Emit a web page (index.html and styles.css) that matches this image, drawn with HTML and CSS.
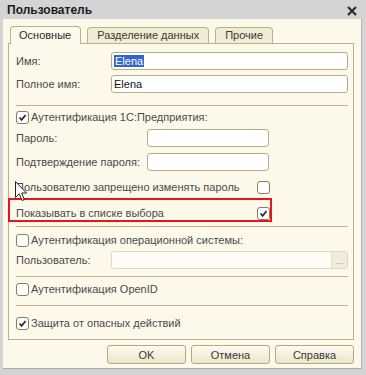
FILE: index.html
```html
<!DOCTYPE html>
<html lang="ru">
<head>
    <meta charset="UTF-8">
    <meta name="viewport" content="width=device-width, initial-scale=1.0">
    <title>Пользователь</title>
    <link rel="stylesheet" href="styles.css">
</head>
<body>

    <div class="window">
        <div class="titlebar">
            <span class="title">Пользователь</span>
            <svg class="close" width="10" height="10" viewBox="0 0 10 10">
                <path d="M1 1 L9 9 M9 1 L1 9" stroke="#2b2b2b" stroke-width="2.2" fill="none"/>
            </svg>
        </div>

        <div class="frame">
            <div class="tabs">
                <div class="tab active">Основные</div>
                <div class="tab">Разделение данных</div>
                <div class="tab">Прочие</div>
            </div>

            <div class="panel">
                <div class="field first">
                    <label class="lbl">Имя:</label>
                    <div class="input"><span class="selected">Elena</span></div>
                </div>
                <div class="field gap5">
                    <label class="lbl">Полное имя:</label>
                    <div class="input">Elena</div>
                </div>

                <div class="sep s12"></div>

                <div class="check m4">
                    <span class="cb on"><svg viewBox="0 0 11 11"><path d="M2.5 5.5 L4.6 7.8 L8.6 3" /></svg></span>
                    <span>Аутентификация 1С:Предприятия:</span>
                </div>

                <div class="field pass gap5">
                    <label class="lbl">Пароль:</label>
                    <div class="input"></div>
                </div>
                <div class="field pass gap6">
                    <label class="lbl">Подтверждение пароля:</label>
                    <div class="input"></div>
                </div>

                <div class="check right m9">
                    <span class="txt">Пользователю запрещено изменять пароль</span>
                    <span class="cb"></span>
                </div>

                <div class="check right m12">
                    <span class="txt">Показывать в списке выбора</span>
                    <span class="cb on"><svg viewBox="0 0 11 11"><path d="M2.5 5.5 L4.6 7.8 L8.6 3" /></svg></span>
                </div>

                <div class="sep s6"></div>

                <div class="check m6">
                    <span class="cb"></span>
                    <span>Аутентификация операционной системы:</span>
                </div>

                <div class="field gap4">
                    <label class="lbl">Пользователь:</label>
                    <div class="input disabled">
                        <span class="value"></span>
                        <span class="pick">...</span>
                    </div>
                </div>

                <div class="sep s7"></div>

                <div class="check m5">
                    <span class="cb"></span>
                    <span>Аутентификация OpenID</span>
                </div>

                <div class="sep s9"></div>

                <div class="check m10">
                    <span class="cb on"><svg viewBox="0 0 11 11"><path d="M2.5 5.5 L4.6 7.8 L8.6 3" /></svg></span>
                    <span>Защита от опасных действий</span>
                </div>

                <!-- annotation over the form -->
                <div class="highlight"></div>
                <svg class="cursor" width="13" height="21" viewBox="0 0 13 21">
                    <path d="M0.5 0.5 L0.5 16.5 L4.3 12.8 L7 19.5 L9.3 18.5 L6.7 12 L11.5 12 Z" fill="#fff" stroke="#222" stroke-width="1"/>
                </svg>
            </div>

            <div class="buttons">
                <button class="btn">OK</button>
                <button class="btn">Отмена</button>
                <button class="btn">Справка</button>
            </div>
        </div>
    </div>

</body>
</html>
```

FILE: styles.css
```css
body {
    margin: 0;
    padding: 0;
    background-color: #d4d4d4;
    font-family: "Liberation Sans", Arial, sans-serif;
    font-size: 11px;
    color: #4a4a4a;
}

.window {
    width: 366px;
    height: 375px;
    overflow: hidden;
}

.titlebar {
    height: 19px;
    display: flex;
    align-items: center;
    justify-content: space-between;
    padding: 0 9px 0 7px;
    background-color: #d4d4d4;
}

.title {
    font-size: 12px;
    font-weight: bold;
    color: #1c1c1c;
    padding-top: 1px;
}

.close {
    margin-top: 2px;
}

.frame {
    margin: 0 4px 0 3px;
    height: 350px;
    padding: 7px 7px 0 5px;
    box-sizing: border-box;
    background-color: #fcf9eb;
    border-right: 1px solid #b4b4b4;
    border-bottom: 1px solid #aaaaaa;
}

/* tabs */

.tabs {
    display: flex;
    align-items: flex-start;
    gap: 6px;
    margin-left: 2px;
    height: 17px;
}

.tab {
    height: 16px;
    line-height: 15px;
    margin-top: 1px;
    padding: 0 9px;
    border: 1px solid #b9b18b;
    border-bottom: none;
    border-radius: 4px 4px 0 0;
    background-color: #f0ebd3;
    color: #3a3a3a;
    box-sizing: border-box;
}

.tab.active {
    height: 18px;
    margin-top: 0;
    padding: 0 9px 0 8px;
    line-height: 17px;
    background-color: #fcf9eb;
    position: relative;
    z-index: 1;
    color: #2a2a2a;
}

/* panel */

.panel {
    position: relative;
    height: 297px;
    box-sizing: border-box;
    border: 1px solid #b9b18b;
    padding: 8px 5px 0 7px;
    background-color: #fcf9eb;
}

.field {
    display: flex;
    align-items: center;
    height: 18px;
}

.lbl {
    flex: 0 0 95px;
}

.field.pass .lbl {
    flex-basis: 131px;
}

.input {
    flex: 1;
    height: 18px;
    box-sizing: border-box;
    border: 1px solid #b6ae88;
    border-radius: 3px;
    background-color: #fff;
    padding-left: 2px;
    line-height: 16px;
    color: #111;
}

.field.pass .input {
    flex: 0 0 122px;
}

.selected {
    background-color: #3366cc;
    color: #fff;
    padding: 0 1px;
    display: inline-block;
    line-height: 12px;
    margin-top: 2px;
}

.input.disabled {
    display: flex;
    padding: 0;
    border-color: #dcd7c1;
    background-color: #fdfcf6;
}

.input.disabled .value {
    flex: 1;
}

.pick {
    width: 15px;
    border-left: 1px solid #e6e1cc;
    background-color: #f1edda;
    border-radius: 0 2px 2px 0;
    color: #a39b7c;
    font-size: 9px;
    text-align: center;
    line-height: 18px;
}

.sep {
    height: 1px;
    background-color: #bdb48c;
}

.check {
    display: flex;
    align-items: center;
    height: 14px;
    gap: 2px;
}

.check.right .txt {
    flex: 0 0 239px;
}

.cb {
    width: 13px;
    height: 13px;
    box-sizing: border-box;
    border: 1px solid #857e63;
    border-radius: 3px;
    background-color: #fff;
    display: inline-flex;
}

.cb svg {
    width: 11px;
    height: 11px;
}

.cb svg path {
    fill: none;
    stroke: #2e2e2e;
    stroke-width: 1.8;
}

.gap4 { margin-top: 4px; }
.gap5 { margin-top: 5px; }
.gap6 { margin-top: 6px; }
.m4 { margin-top: 4px; }
.m5 { margin-top: 5px; }
.m6 { margin-top: 6px; }
.m9 { margin-top: 9px; }
.m10 { margin-top: 10px; }
.m12 { margin-top: 12px; }
.s6 { margin-top: 6px; }
.s7 { margin-top: 7px; }
.s9 { margin-top: 9px; }
.s12 { margin-top: 12px; }

.highlight {
    position: absolute;
    left: -1px;
    top: 154px;
    width: 264px;
    height: 24px;
    box-sizing: border-box;
    border: 2px solid #e8141a;
}

.cursor {
    position: absolute;
    left: 6px;
    top: 137px;
}

/* buttons */

.buttons {
    display: flex;
    justify-content: flex-end;
    gap: 5px;
    margin-top: 5px;
}

.btn {
    width: 79px;
    height: 19px;
    padding: 0;
    border: 1px solid #b3aa80;
    border-radius: 3px;
    background: linear-gradient(#fdfbf1, #ebe5ca);
    font-family: "Liberation Sans", Arial, sans-serif;
    font-size: 11px;
    color: #3a3a3a;
}
```
